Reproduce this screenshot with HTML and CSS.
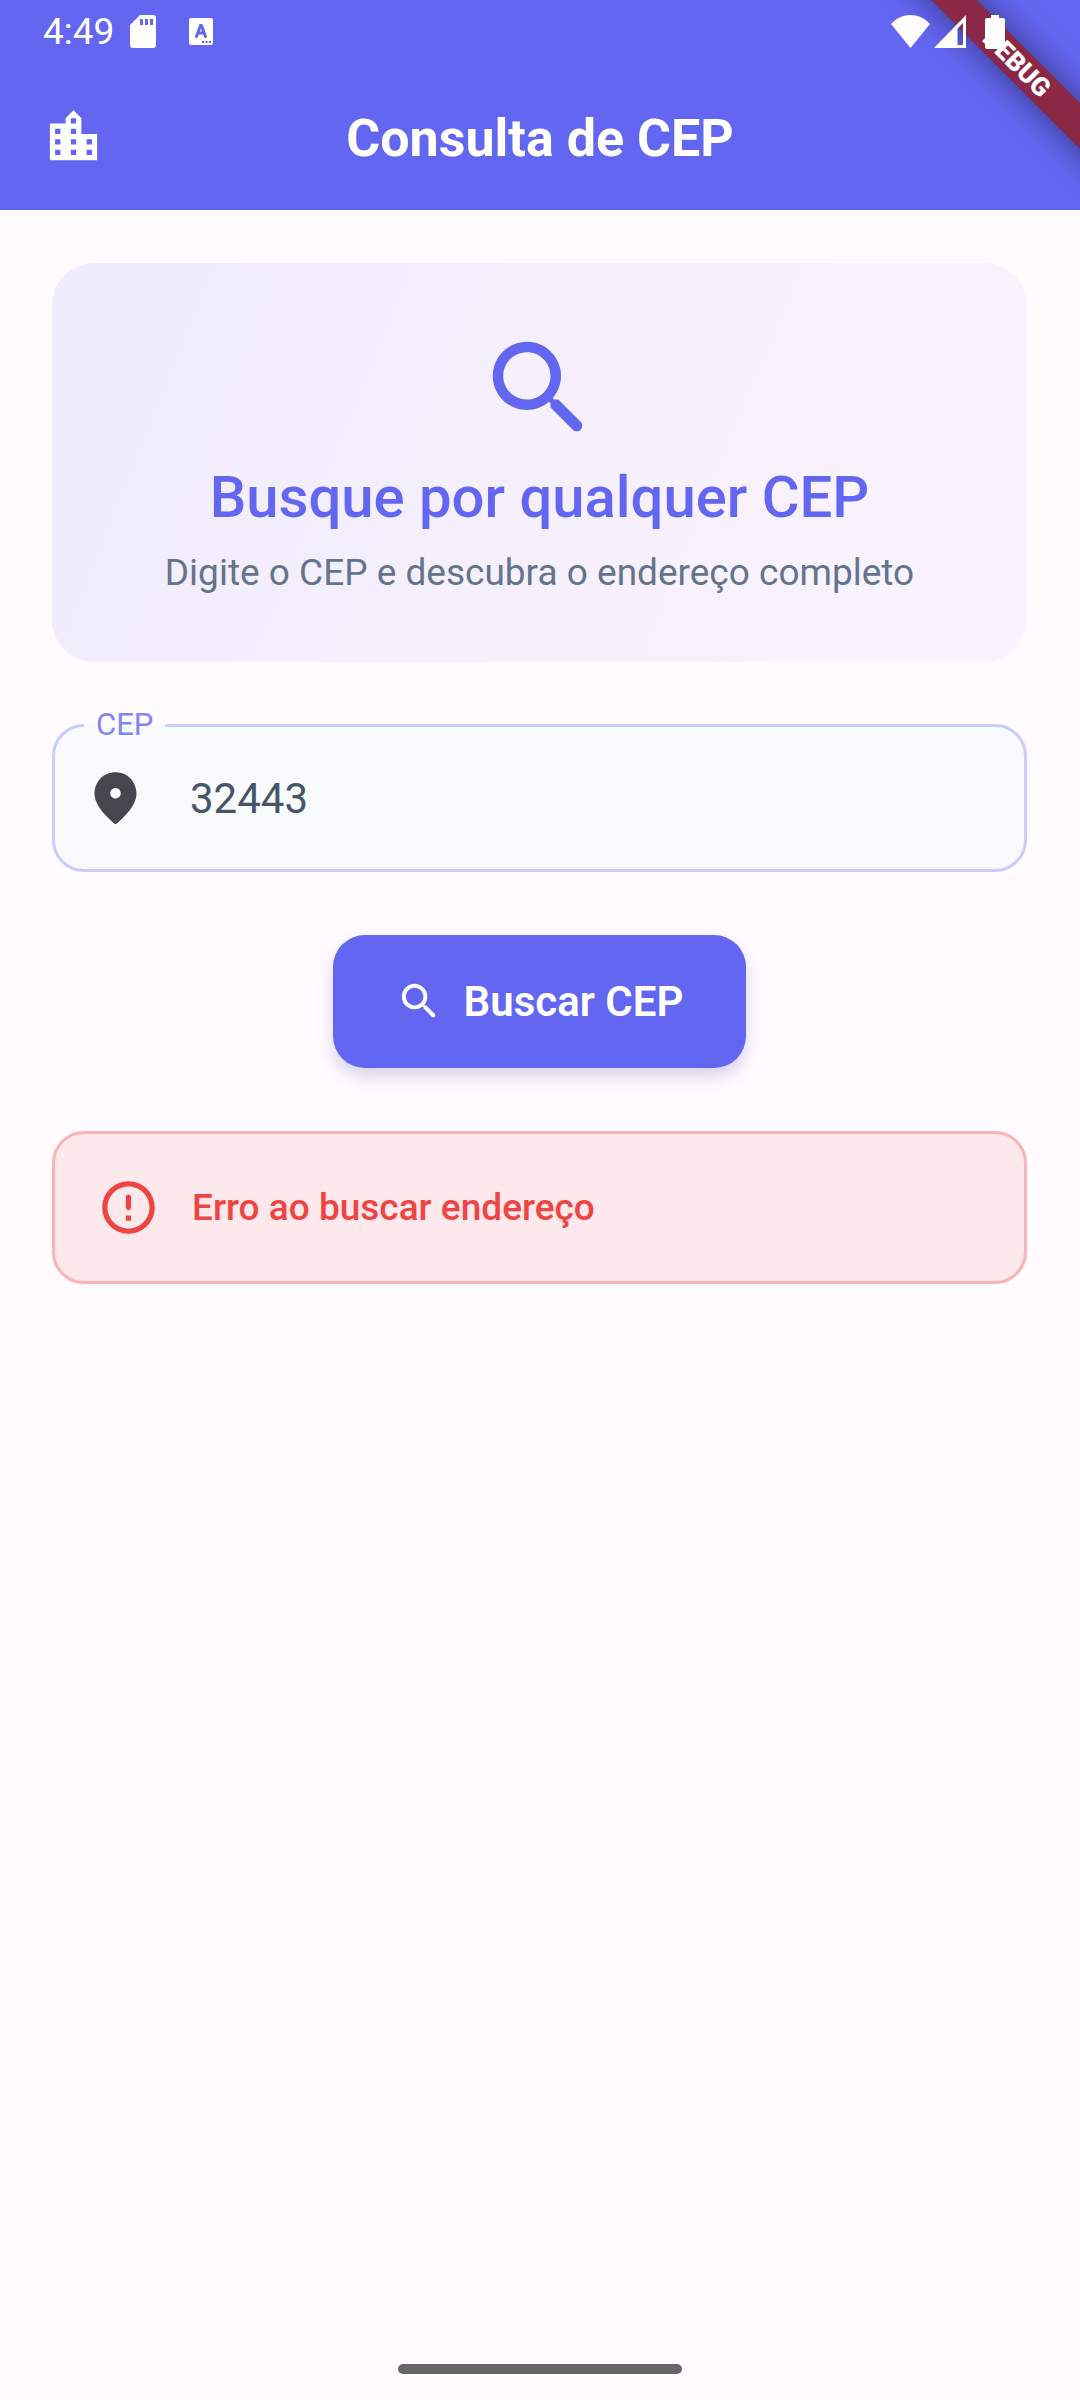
FILE: index.html
```html
<!DOCTYPE html>
<html lang="pt-BR">
<head>
<meta charset="utf-8">
<meta name="viewport" content="width=device-width, initial-scale=1">
<title>Consulta de CEP</title>
<link rel="stylesheet" href="styles.css">
</head>
<body>
<div class="app">
  <header class="header">
    <div class="debug-banner">DEBUG</div>
    <div class="status">
      <div class="status-left">
        <span class="clock">4:49</span>
        <svg class="sd" viewBox="0 0 26 33" fill="#fff" fill-rule="evenodd"><path d="M10 0H23a3 3 0 0 1 3 3V30a3 3 0 0 1-3 3H3a3 3 0 0 1-3-3V10zM10 4v6h3V4zM15 4v6h3V4zM20 4v6h3V4z"/></svg>
        <svg class="lang" viewBox="0 0 24 27" fill-rule="evenodd"><path fill="#fff" d="M2 0H22a2 2 0 0 1 2 2V25a2 2 0 0 1-2 2H2a2 2 0 0 1-2-2V2a2 2 0 0 1 2-2z"/><path fill="none" stroke="#6366f1" stroke-width="3" stroke-linecap="round" stroke-linejoin="round" d="M7.500 18.500 11.500 7.500h1L16.500 18.500M9 15h6"/><path fill="#6366f1" d="M13 23h2v2h-2zM16.500 23h2v2h-2zM20 23h2v2h-2z"/></svg>
      </div>
      <div class="status-right">
        <svg class="wifi" viewBox="0 0 39 33" fill="#fff"><path d="M0 9C11-3 28-3 39 9L19.500 33z"/></svg>
        <svg class="signal" viewBox="0 0 32 33"><path fill="#fff" fill-rule="evenodd" d="M32 0V33H0zM29 8 23.500 13.500V30H29z"/></svg>
        <svg class="battery" viewBox="0 0 20 34" fill="#fff"><path d="M6 0h8v3h4a2 2 0 0 1 2 2V32a2 2 0 0 1-2 2H2a2 2 0 0 1-2-2V5a2 2 0 0 1 2-2h4z"/></svg>
      </div>
    </div>
    <div class="toolbar">
      <svg class="icon" viewBox="0 0 24 24" fill="#fff"><path d="M15 11V5l-3-3-3 3v2H3v14h18V11h-6zm-8 8H5v-2h2v2zm0-4H5v-2h2v2zm0-4H5V9h2v2zm6 8h-2v-2h2v2zm0-4h-2v-2h2v2zm0-4h-2V9h2v2zm0-4h-2V5h2v2zm6 12h-2v-2h2v2zm0-4h-2v-2h2v2z"/></svg>
      <h1 class="title">Consulta de CEP</h1>
    </div>
  </header>
  <main class="content">
    <section class="hero">
      <svg class="hero-icon" viewBox="0 0 24 24" fill="#6366f1"><path d="M15.500 14h-.79l-.28-.27c1.200-1.400 1.820-3.310 1.480-5.340-.47-2.780-2.790-5-5.590-5.340-4.230-.52-7.790 3.040-7.270 7.270.34 2.800 2.560 5.120 5.340 5.590 2.030.34 3.940-.28 5.340-1.480l.27.28v.79l4.250 4.250c.41.41 1.080.41 1.490 0 .41-.41.41-1.080 0-1.490L15.500 14zm-6 0C7.010 14 5 11.990 5 9.500S7.010 5 9.500 5 14 7.010 14 9.500 11.990 14 9.500 14z"/></svg>
      <h2 class="hero-title">Busque por qualquer CEP</h2>
      <p class="hero-text">Digite o CEP e descubra o endereço completo</p>
    </section>
    <form class="form">
      <fieldset class="field">
        <legend class="legend"><label for="cep">CEP</label></legend>
        <div class="field-row">
          <svg class="icon" viewBox="0 0 24 24" fill="#46464f"><path d="M12 2C7.800 2 4 5.220 4 10.200c0 3.180 2.450 6.920 7.340 11.230.38.33.95.33 1.330 0C17.550 17.120 20 13.380 20 10.200 20 5.220 16.200 2 12 2zm0 10c-1.100 0-2-.9-2-2s.9-2 2-2 2 .9 2 2-.9 2-2 2z"/></svg>
          <input class="input" id="cep" type="text" inputmode="numeric" value="32443">
        </div>
      </fieldset>
      <button class="submit" type="button">
        <svg class="submit-icon" viewBox="0 0 24 24" fill="#fff"><path d="M15.500 14h-.79l-.28-.27c1.200-1.400 1.820-3.310 1.480-5.340-.47-2.780-2.790-5-5.590-5.340-4.230-.52-7.790 3.040-7.270 7.270.34 2.800 2.560 5.120 5.340 5.590 2.030.34 3.940-.28 5.340-1.480l.27.28v.79l4.250 4.250c.41.41 1.080.41 1.490 0 .41-.41.41-1.080 0-1.490L15.500 14zm-6 0C7.010 14 5 11.990 5 9.500S7.010 5 9.500 5 14 7.010 14 9.500 11.990 14 9.500 14z"/></svg>
        <span>Buscar CEP</span>
      </button>
    </form>
    <div class="error" role="alert">
      <svg class="icon" viewBox="0 0 24 24" fill="#ef4444"><path d="M12 7c.55 0 1 .45 1 1v4c0 .55-.45 1-1 1s-1-.45-1-1V8c0-.55.45-1 1-1zm-.01-5C6.470 2 2 6.480 2 12s4.470 10 9.990 10C17.520 22 22 17.520 22 12S17.520 2 11.990 2zM12 20c-4.420 0-8-3.580-8-8s3.580-8 8-8 8 3.580 8 8-3.580 8-8 8zm1-3h-2v-2h2v2z"/></svg>
      <span>Erro ao buscar endereço</span>
    </div>
  </main>
  <footer class="nav"><div class="handle"></div></footer>
</div>
</body>
</html>
```
FILE: styles.css
```css
* { box-sizing: border-box; }

body {
  margin: 0;
  background: #fffbff;
  font-family: Roboto, "Liberation Sans", sans-serif;
}

.app {
  display: flex;
  flex-direction: column;
  min-height: 100vh;
}

svg { display: block; flex: none; }

.icon { width: 63px; height: 63px; }

.header {
  position: relative;
  overflow: hidden;
  background: #6366f1;
  color: #fff;
}

.status {
  position: relative;
  display: flex;
  justify-content: space-between;
  align-items: center;
  height: 63px;
  padding: 0 75px 0 43px;
}

.status-left, .status-right { display: flex; align-items: center; }

.clock { font-size: 37px; line-height: 44px; margin-right: 16px; }

.sd { width: 26px; height: 33px; margin-right: 33px; }
.lang { width: 24px; height: 27px; }
.wifi { width: 39px; height: 33px; margin-right: 4px; }
.signal { width: 32px; height: 33px; margin-right: 19px; }
.battery { width: 20px; height: 34px; }

/* Diagonal ribbon laid over the top right corner */
.debug-banner {
  position: absolute;
  top: 47px;
  right: -147px;
  width: 420px;
  height: 32px;
  transform: rotate(45deg);
  background: #8a2846;
  box-shadow: 0 0 32px rgba(0, 0, 0, 0.5);
  font-size: 26px;
  font-weight: 900;
  line-height: 32px;
  text-align: center;
}

.toolbar {
  display: grid;
  grid-template-columns: 63px 1fr 63px;
  align-items: center;
  height: 147px;
  padding: 0 42px;
}

.title {
  margin: 0;
  padding-top: 4px;
  font-size: 52px;
  font-weight: 700;
  line-height: 63px;
  text-align: center;
}

.content {
  flex: 1;
  padding: 53px 53px 53px 52px;
}

.hero {
  display: flex;
  flex-direction: column;
  align-items: center;
  padding: 63px 53px;
  border-radius: 42px;
  background: linear-gradient(112deg, #eeecfd, #f6f0fe 50%, #f9f4fe);
  text-align: center;
}

.hero-icon { width: 126px; height: 126px; }

.hero-title {
  margin: 8px 0 12px;
  color: #6366f1;
  font-size: 58px;
  font-weight: 500;
  line-height: 74px;
}

.hero-text {
  margin: 0;
  color: #64748b;
  font-size: 37px;
  line-height: 53px;
}

.form {
  display: flex;
  flex-direction: column;
  align-items: center;
  gap: 63px;
  margin: 44px 0 63px;
}

.field {
  width: 100%;
  margin: 0;
  padding: 0 29px 17px;
  border: 3px solid #c9cdfb;
  border-radius: 32px;
  background: #f8fafc;
}

.legend {
  padding: 0 12px;
  color: #8285f4;
  font-size: 31px;
  line-height: 38px;
}

.field-row {
  display: flex;
  align-items: center;
  gap: 43px;
  height: 108px;
}

.input {
  flex: 1;
  min-width: 0;
  padding: 0;
  border: 0;
  outline: 0;
  background: none;
  color: #475569;
  font: 400 42px/63px Roboto, "Liberation Sans", sans-serif;
}

.submit {
  display: flex;
  align-items: center;
  gap: 21px;
  height: 133px;
  padding: 0 63px;
  border: 0;
  border-radius: 32px;
  background: #6366f1;
  box-shadow: 0 8px 16px rgba(70, 70, 170, 0.22);
  color: #fff;
  font: 600 42px/63px Roboto, "Liberation Sans", sans-serif;
}

.submit-icon { width: 47px; height: 47px; }

.error {
  display: flex;
  align-items: center;
  gap: 32px;
  padding: 42px;
  border: 3px solid #f9b4b8;
  border-radius: 32px;
  background: #fde8eb;
  color: #ef4444;
  font-size: 37px;
  font-weight: 500;
  line-height: 63px;
}

.nav {
  display: flex;
  justify-content: center;
  padding-bottom: 26px;
}

.handle {
  width: 284px;
  height: 10px;
  border-radius: 5px;
  background: #666;
}
```
